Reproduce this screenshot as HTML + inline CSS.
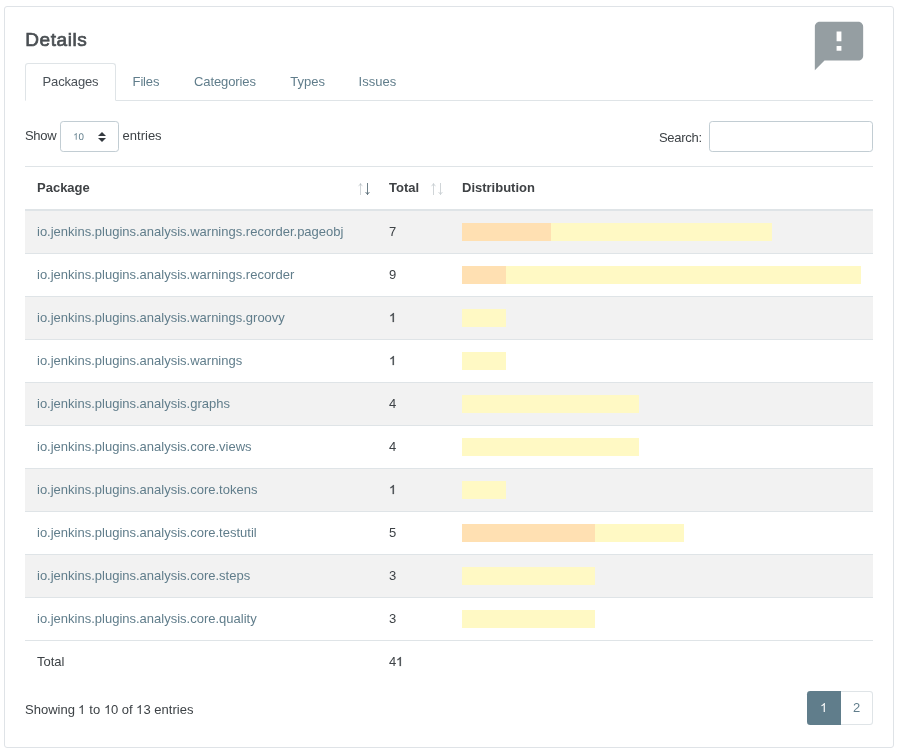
<!DOCTYPE html>
<html>
<head>
<meta charset="utf-8">
<title>Details</title>
<style>
*{box-sizing:border-box;}
html,body{margin:0;padding:0;background:#fff;}
body{width:899px;height:755px;overflow:hidden;position:relative;will-change:transform;font-family:"Liberation Sans",sans-serif;font-size:13px;color:#3d4246;}
.card{position:absolute;left:4px;top:6px;width:890px;height:742px;border:1px solid #dfe3e7;border-radius:3px;background:#fff;}
.title{position:absolute;left:25.3px;top:28px;font-size:19px;font-weight:normal;color:#4a4f53;line-height:24px;letter-spacing:0.55px;-webkit-text-stroke:0.7px #4a4f53;}
.icon{position:absolute;left:810px;top:17px;width:58px;height:58px;}
.tabs{position:absolute;left:25px;top:63px;width:848px;height:38px;border-bottom:1px solid #dfe4e7;}
.tab{position:absolute;top:0;height:38px;line-height:37px;color:#607d8b;font-size:13px;}
.tab.active{left:0;width:91px;border:1px solid #dfe4e7;border-bottom-color:#fff;border-radius:3.25px 3.25px 0 0;color:#495057;text-align:center;line-height:35px;letter-spacing:-0.15px;}
.lbl{position:absolute;font-size:13px;line-height:16px;color:#3d4246;}
.select{position:absolute;left:60px;top:121px;width:59px;height:31px;border:1px solid #c2cdd3;border-radius:3.25px;background:#fff;}
.select span{position:absolute;left:11.8px;top:8px;font-size:9.75px;line-height:14px;color:#607d8b;letter-spacing:-0.3px;transform:rotate(0.03deg);}
.select svg.ar{position:absolute;left:37px;top:10px;width:8px;height:10px;}
.search{position:absolute;left:709px;top:121px;width:164px;height:31px;border:1px solid #c2cdd3;border-radius:3.25px;background:#fff;}
table{position:absolute;left:25px;top:166px;width:848px;border-collapse:separate;border-spacing:0;font-size:13px;}
th{height:45px;line-height:15px;text-align:left;font-weight:bold;color:#3f4245;padding:0 0 2px 12px;border-top:1px solid #dfe4e7;border-bottom:2px solid #dfe4e7;position:relative;}
td{height:43px;line-height:15px;padding:0 0 1px 12px;border-bottom:1px solid #dfe4e7;color:#3d4246;}
tfoot td{border-bottom:0;padding-bottom:2px;}
td .bar{position:relative;top:0.5px;}
tbody tr:nth-child(odd) td{background:#f2f2f2;}
td.pkg{color:#607d8b;}
.bar{display:flex;height:18px;}
.bar i{display:block;height:18px;}
.o{background:#ffe0b2;}
.y{background:#fff9c4;}
.sort{position:absolute;top:15px;font-size:12px;}
.info{position:absolute;left:25px;top:702px;line-height:16px;}
.p1{position:absolute;left:807px;top:691px;width:34px;height:34px;line-height:34px;text-align:center;background:#607d8b;color:#fff;border-radius:3.25px 0 0 3.25px;}
.p2{position:absolute;left:841px;top:691px;width:32px;height:34px;line-height:32px;text-align:center;color:#607d8b;border:1px solid #dfe4e7;border-left:0;border-radius:0 3.25px 3.25px 0;}
.arr{position:absolute;left:0;top:0;width:899px;height:755px;pointer-events:none;}
.n1{display:inline-block;width:.556em;height:.695em;vertical-align:baseline;fill:currentColor;overflow:visible;}
td .n1{stroke:currentColor;stroke-width:36;}
</style>
</head>
<body>
<div class="card"></div>
<div class="title">Details</div>
<svg class="icon" viewBox="0 0 24 24"><path fill="#959ea2" d="M20 2H4c-1.1 0-1.99.9-1.99 2L2 22l4-4h14c1.1 0 2-.9 2-2V4c0-1.1-.9-2-2-2zm-7 12h-2v-2h2v2zm0-4h-2V6h2v4z"/></svg>
<div class="tabs">
  <div class="tab active">Packages</div>
  <div class="tab" style="left:107.6px;letter-spacing:-0.15px">Files</div>
  <div class="tab" style="left:169px;letter-spacing:-0.1px">Categories</div>
  <div class="tab" style="left:265.3px">Types</div>
  <div class="tab" style="left:333.6px">Issues</div>
</div>
<div class="lbl" style="left:25px;top:128px;letter-spacing:-0.3px">Show</div>
<div class="select"><span><svg class="n1" viewBox="0 -1472 1139 1472" preserveAspectRatio="none"><path transform="scale(1,-1)" d="M763 0H583V1147Q518 1085 412.5 1023T223 930V1104Q374 1175 487 1276T647 1472H763Z"/></svg>0</span><svg class="ar" viewBox="0 0 4 5"><path fill="#343a40" d="M2 0L0 2h4zm0 5L0 3h4z"/></svg></div>
<div class="lbl" style="left:122.6px;top:128px">entries</div>
<div class="lbl" style="left:659px;top:130px;letter-spacing:-0.3px">Search:</div>
<div class="search"></div>
<table>
<thead><tr>
<th style="width:352px">Package</th>
<th style="width:73px">Total</th>
<th>Distribution</th>
</tr></thead>
<tbody>
<tr><td class="pkg">io.jenkins.plugins.analysis.warnings.recorder.pageobj</td><td>7</td><td><div class="bar"><i class="o" style="width:89px"></i><i class="y" style="width:221px"></i></div></td></tr>
<tr><td class="pkg">io.jenkins.plugins.analysis.warnings.recorder</td><td>9</td><td><div class="bar"><i class="o" style="width:44px"></i><i class="y" style="width:355px"></i></div></td></tr>
<tr><td class="pkg">io.jenkins.plugins.analysis.warnings.groovy</td><td><svg class="n1" viewBox="0 -1472 1139 1472" preserveAspectRatio="none"><path transform="scale(1,-1)" d="M763 0H583V1147Q518 1085 412.5 1023T223 930V1104Q374 1175 487 1276T647 1472H763Z"/></svg></td><td><div class="bar"><i class="y" style="width:44px"></i></div></td></tr>
<tr><td class="pkg">io.jenkins.plugins.analysis.warnings</td><td><svg class="n1" viewBox="0 -1472 1139 1472" preserveAspectRatio="none"><path transform="scale(1,-1)" d="M763 0H583V1147Q518 1085 412.5 1023T223 930V1104Q374 1175 487 1276T647 1472H763Z"/></svg></td><td><div class="bar"><i class="y" style="width:44px"></i></div></td></tr>
<tr><td class="pkg">io.jenkins.plugins.analysis.graphs</td><td>4</td><td><div class="bar"><i class="y" style="width:177px"></i></div></td></tr>
<tr><td class="pkg">io.jenkins.plugins.analysis.core.views</td><td>4</td><td><div class="bar"><i class="y" style="width:177px"></i></div></td></tr>
<tr><td class="pkg">io.jenkins.plugins.analysis.core.tokens</td><td><svg class="n1" viewBox="0 -1472 1139 1472" preserveAspectRatio="none"><path transform="scale(1,-1)" d="M763 0H583V1147Q518 1085 412.5 1023T223 930V1104Q374 1175 487 1276T647 1472H763Z"/></svg></td><td><div class="bar"><i class="y" style="width:44px"></i></div></td></tr>
<tr><td class="pkg">io.jenkins.plugins.analysis.core.testutil</td><td>5</td><td><div class="bar"><i class="o" style="width:133px"></i><i class="y" style="width:89px"></i></div></td></tr>
<tr><td class="pkg">io.jenkins.plugins.analysis.core.steps</td><td>3</td><td><div class="bar"><i class="y" style="width:133px"></i></div></td></tr>
<tr><td class="pkg">io.jenkins.plugins.analysis.core.quality</td><td>3</td><td><div class="bar"><i class="y" style="width:133px"></i></div></td></tr>
</tbody>
<tfoot><tr><td>Total</td><td>4<svg class="n1" viewBox="0 -1472 1139 1472" preserveAspectRatio="none"><path transform="scale(1,-1)" d="M763 0H583V1147Q518 1085 412.5 1023T223 930V1104Q374 1175 487 1276T647 1472H763Z"/></svg></td><td></td></tr></tfoot>
</table>
<svg class="arr" viewBox="0 0 899 755" fill="none" stroke="#4a5f6b" stroke-width="0.8">
<g opacity="0.32"><path d="M360.5 183.4V195M358.6 186.2L360.5 183.7L362.4 186.2"/></g>
<g><path d="M367.5 183V194.6M365.6 192.0L367.5 194.5L369.4 192.0"/></g>
<g opacity="0.32"><path d="M433.5 183.4V195M431.6 186.2L433.5 183.7L435.4 186.2"/><path d="M440.5 183V194.6M438.6 192.0L440.5 194.5L442.4 192.0"/></g>
</svg>
<div class="info">Showing <svg class="n1" viewBox="0 -1472 1139 1472" preserveAspectRatio="none"><path transform="scale(1,-1)" d="M763 0H583V1147Q518 1085 412.5 1023T223 930V1104Q374 1175 487 1276T647 1472H763Z"/></svg> to <svg class="n1" viewBox="0 -1472 1139 1472" preserveAspectRatio="none"><path transform="scale(1,-1)" d="M763 0H583V1147Q518 1085 412.5 1023T223 930V1104Q374 1175 487 1276T647 1472H763Z"/></svg>0 of <svg class="n1" viewBox="0 -1472 1139 1472" preserveAspectRatio="none"><path transform="scale(1,-1)" d="M763 0H583V1147Q518 1085 412.5 1023T223 930V1104Q374 1175 487 1276T647 1472H763Z"/></svg>3 entries</div>
<div class="p1"><svg class="n1" viewBox="0 -1472 1139 1472" preserveAspectRatio="none"><path transform="scale(1,-1)" d="M763 0H583V1147Q518 1085 412.5 1023T223 930V1104Q374 1175 487 1276T647 1472H763Z"/></svg></div><div class="p2">2</div>
</body>
</html>
